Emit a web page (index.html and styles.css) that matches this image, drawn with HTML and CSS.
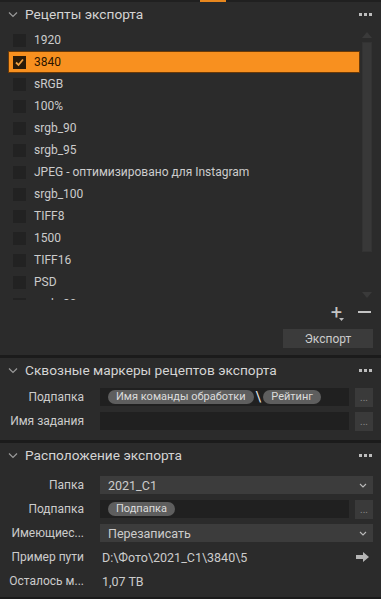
FILE: index.html
```html
<!DOCTYPE html>
<html lang="ru">
<head>
  <meta charset="UTF-8" />
  <title>Экспорт</title>
  <link rel="stylesheet" href="styles.css">
</head>
<body>

  <!-- top tab strip -->
  <div class="topbar"><span class="tab-mark"></span></div>

  <!-- Export recipes -->
  <section class="panel recipes">
    <div class="panel-head">
      <svg class="chev" width="10" height="7" viewBox="0 0 10 7"><path d="M1 1.5 L5 5.5 L9 1.5" fill="none" stroke="#9a9a9a" stroke-width="1.2"/></svg>
      <h2>Рецепты экспорта</h2>
      <span class="dots"><i></i><i></i><i></i></span>
    </div>

    <div class="list-wrap">
      <ul class="recipe-list">
        <li><span class="box"></span>1920</li>
        <li class="selected"><span class="box"><svg width="11" height="11" viewBox="0 0 11 11"><path d="M2 5.5 L4.5 8 L9 2.5" fill="none" stroke="#f0a040" stroke-width="1.8"/></svg></span>3840</li>
        <li><span class="box"></span>sRGB</li>
        <li><span class="box"></span>100%</li>
        <li><span class="box"></span>srgb_90</li>
        <li><span class="box"></span>srgb_95</li>
        <li><span class="box"></span>JPEG - оптимизировано для Instagram</li>
        <li><span class="box"></span>srgb_100</li>
        <li><span class="box"></span>TIFF8</li>
        <li><span class="box"></span>1500</li>
        <li><span class="box"></span>TIFF16</li>
        <li><span class="box"></span>PSD</li>
        <li><span class="box"></span>srgb_80</li>
      </ul>
      <div class="scrollbar">
        <span class="arrow up"></span>
        <span class="thumb"></span>
        <span class="arrow down"></span>
      </div>
    </div>

    <div class="list-tools">
      <span class="plus">+<svg width="5" height="3" viewBox="0 0 5 3"><path d="M0 0 H5 L2.5 3 Z" fill="#bbb"/></svg></span>
      <span class="minus"></span>
    </div>
    <div class="export-row">
      <button class="btn">Экспорт</button>
    </div>
  </section>

  <!-- Recipe tokens -->
  <section class="panel tokens">
    <div class="panel-head">
      <svg class="chev" width="10" height="7" viewBox="0 0 10 7"><path d="M1 1.5 L5 5.5 L9 1.5" fill="none" stroke="#9a9a9a" stroke-width="1.2"/></svg>
      <h2>Сквозные маркеры рецептов экспорта</h2>
      <span class="dots"><i></i><i></i><i></i></span>
    </div>
    <div class="form">
      <div class="row">
        <label>Подпапка</label>
        <div class="field"><span class="pill">Имя команды обработки</span><span class="slash">\</span><span class="pill">Рейтинг</span></div>
        <button class="more">...</button>
      </div>
      <div class="row">
        <label>Имя задания</label>
        <div class="field"></div>
        <button class="more">...</button>
      </div>
    </div>
  </section>

  <!-- Export location -->
  <section class="panel">
    <div class="panel-head">
      <svg class="chev" width="10" height="7" viewBox="0 0 10 7"><path d="M1 1.5 L5 5.5 L9 1.5" fill="none" stroke="#9a9a9a" stroke-width="1.2"/></svg>
      <h2>Расположение экспорта</h2>
      <span class="dots"><i></i><i></i><i></i></span>
    </div>
    <div class="form location">
      <div class="row">
        <label>Папка</label>
        <div class="select">2021_C1<svg width="8" height="5" viewBox="0 0 8 5"><path d="M1 1 L4 4 L7 1" fill="none" stroke="#bbb" stroke-width="1.1"/></svg></div>
      </div>
      <div class="row">
        <label>Подпапка</label>
        <div class="field"><span class="pill">Подпапка</span></div>
        <button class="more">...</button>
      </div>
      <div class="row">
        <label>Имеющиес...</label>
        <div class="select">Перезаписать<svg width="8" height="5" viewBox="0 0 8 5"><path d="M1 1 L4 4 L7 1" fill="none" stroke="#bbb" stroke-width="1.1"/></svg></div>
      </div>
      <div class="row">
        <label>Пример пути</label>
        <div class="value">D:\Фото\2021_C1\3840\5</div>
        <svg class="go" width="14" height="10" viewBox="0 0 14 10"><path d="M0 3 H7 V0 L13 5 L7 10 V7 H0 Z" fill="#b5b5b5"/></svg>
      </div>
      <div class="row">
        <label>Осталось м...</label>
        <div class="value">1,07 TB</div>
      </div>
    </div>
  </section>

</body>
</html>
```

FILE: styles.css
```css
body {
  margin: 0;
  background: #2b2b2b;
  color: #cccccc;
  font-family: Roboto, "Liberation Sans", sans-serif;
  font-size: 12px;
  width: 381px;
  height: 599px;
  overflow: hidden;
}

.topbar {
  height: 2px;
  background: #202020;
  display: flex;
}

.tab-mark {
  width: 26px;
  margin-left: 200px;
  background: #e8871e;
}

.panel {
  border-bottom: 3px solid #1b1b1b;
}

.panel-head {
  height: 24px;
  display: flex;
  align-items: center;
  padding: 0 8px;
  gap: 7px;
}

.panel-head h2 {
  margin: 0;
  font-size: 13.7px;
  font-weight: normal;
  color: #d4d4d4;
  flex: 1;
  white-space: nowrap;
}

.dots {
  display: flex;
  gap: 2px;
  padding-right: 1px;
}

.dots i {
  width: 3px;
  height: 3px;
  background: #bdbdbd;
}

/* recipe list */
.list-wrap {
  display: flex;
  height: 271px;
  overflow: hidden;
  margin-top: 3px;
}

.recipe-list {
  list-style: none;
  margin: 0;
  padding: 0 0 0 8px;
  flex: 1;
}

.recipe-list li {
  height: 22px;
  display: flex;
  align-items: center;
  gap: 8px;
  padding-left: 5px;
  white-space: nowrap;
}

.recipe-list li.selected {
  background: #f8901f;
  color: #2a1400;
  box-shadow: inset 0 0 0 1px #6a3a08;
}

.box {
  width: 13px;
  height: 13px;
  background: #222;
  display: flex;
  align-items: center;
  justify-content: center;
  flex: none;
}

.selected .box {
  background: #2a1a08;
}

.scrollbar {
  width: 10px;
  margin: 3px 9px 0 2px;
  display: flex;
  flex-direction: column;
  align-items: center;
  gap: 4px;
}

.arrow {
  width: 0;
  height: 0;
  border-left: 5px solid transparent;
  border-right: 5px solid transparent;
}

.arrow.up {
  border-bottom: 6px solid #3a3a3a;
}

.arrow.down {
  margin-top: auto;
  margin-bottom: 2px;
  border-top: 6px solid #3a3a3a;
}

.thumb {
  width: 10px;
  height: 210px;
  background: #383838;
  box-shadow: inset 0 0 0 1px #333;
}

.list-tools {
  display: flex;
  justify-content: flex-end;
  align-items: center;
  gap: 14px;
  height: 20px;
  padding-right: 10px;
  margin-top: 2px;
}

.plus {
  font-size: 20px;
  color: #c4c4c4;
  line-height: 1;
  display: flex;
  align-items: flex-end;
}

.plus svg {
  margin-left: -3px;
  margin-bottom: 1px;
}

.minus {
  width: 13px;
  height: 2px;
  background: #c4c4c4;
}

.export-row {
  display: flex;
  justify-content: flex-end;
  padding: 7px 8px 7px 0;
}

.btn {
  width: 90px;
  height: 19px;
  background: #3b3b3b;
  border: none;
  color: #cccccc;
  font-family: inherit;
  font-size: 12px;
  padding: 0;
}

/* forms */
.form {
  display: flex;
  flex-direction: column;
  gap: 6px;
  padding: 6px 8px 10px 0;
}

.tokens .form {
  padding-bottom: 10px;
}

.form.location {
  padding-top: 9px;
  padding-bottom: 7px;
}

.row {
  display: flex;
  align-items: center;
  gap: 6px;
  height: 18px;
}

.row label {
  width: 84px;
  margin-right: 10px;
  text-align: right;
  white-space: nowrap;
  font-size: 12px;
  color: #cccccc;
  flex: none;
}

.field {
  flex: 1;
  height: 18px;
  background: #202020;
  display: flex;
  align-items: center;
  padding-left: 8px;
  gap: 2px;
}

.pill {
  background: #5e5e5e;
  color: #dcdcdc;
  border-radius: 7px;
  height: 14px;
  line-height: 14px;
  font-size: 11px;
  padding: 0 8px;
  white-space: nowrap;
}

.slash {
  color: #e6e6e6;
  font-size: 14px;
}

.more {
  width: 18px;
  height: 19px;
  background: #3a3a3a;
  border: none;
  color: #8a8a8a;
  font-size: 10px;
  padding: 0;
  line-height: 20px;
  font-family: inherit;
}

.select {
  flex: 1;
  height: 18px;
  background: #3c3c3c;
  display: flex;
  align-items: center;
  justify-content: space-between;
  padding: 0 6px 0 8px;
  font-size: 12.5px;
}

.value {
  flex: 1;
  padding-left: 2px;
  font-size: 12.5px;
}

.go {
  margin-right: 3px;
}
```
